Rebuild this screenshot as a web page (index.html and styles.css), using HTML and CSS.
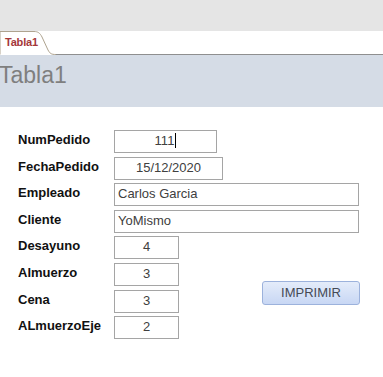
FILE: index.html
```html
<!DOCTYPE html>
<html lang="es">
<head>
    <meta charset="UTF-8">
    <meta name="viewport" content="width=device-width, initial-scale=1.0">
    <title>Tabla1</title>
    <link rel="stylesheet" href="styles.css">
</head>
<body>
    <div class="topbar"></div>

    <div class="tabstrip">
        <div class="tab">
            <svg class="tab-shape" width="56" height="24" viewBox="0 0 56 24">
                <path d="M0 23.5 V0.5 H34 C38 0.5 40 2 42 6 L48 19 C50 22.5 51 23.5 56 23.5" fill="#fff" stroke="#aea38f" stroke-width="1"/>
            </svg>
            <span class="tab-label">Tabla1</span>
        </div>
        <div class="tab-rest"></div>
    </div>

    <div class="header">
        <h1>Tabla1</h1>
    </div>

    <div class="form">
        <label class="lbl">NumPedido</label>
        <div class="box num center">111<span class="caret"></span></div>

        <label class="lbl">FechaPedido</label>
        <div class="box date center">15/12/2020</div>

        <label class="lbl">Empleado</label>
        <div class="box wide">Carlos Garcia</div>

        <label class="lbl">Cliente</label>
        <div class="box wide">YoMismo</div>

        <label class="lbl">Desayuno</label>
        <div class="box small center">4</div>

        <label class="lbl">Almuerzo</label>
        <div class="box small center">3</div>

        <label class="lbl">Cena</label>
        <div class="box small center">3</div>

        <label class="lbl">ALmuerzoEje</label>
        <div class="box small center">2</div>

        <button class="btn-print">IMPRIMIR</button>
    </div>
</body>
</html>
```

FILE: styles.css
```css
body {
    margin: 0;
    font-family: "Liberation Sans", Arial, sans-serif;
    background-color: #fff;
    width: 383px;
    height: 377px;
    overflow: hidden;
}
.topbar {
    height: 31px;
    background-color: #e5e5e5;
}
.tabstrip {
    display: flex;
    height: 24px;
    background-color: #fff;
}
.tab {
    position: relative;
    width: 56px;
    height: 24px;
    flex: none;
}
.tab-shape {
    display: block;
}
.tab-label {
    position: absolute;
    left: 5px;
    top: 5px;
    font-size: 11px;
    font-weight: bold;
    letter-spacing: -0.2px;
    color: #a4373a;
}
.tab-rest {
    flex: 1;
    border-bottom: 1px solid #8f8f8f;
    box-sizing: border-box;
}
.header {
    height: 52px;
    background-color: #d5dce6;
    padding-top: 7px;
    box-sizing: border-box;
}
.header h1 {
    margin: 0 0 0 -1px;
    font-size: 23px;
    font-weight: normal;
    color: #7f7f7f;
    line-height: normal;
}
.form {
    display: grid;
    grid-template-columns: 96px 148px 98px;
    grid-auto-rows: 23px;
    row-gap: 3.6px;
    padding: 23px 0 0 18px;
}
.lbl {
    grid-column: 1;
    display: flex;
    align-items: center;
    padding-bottom: 4px;
    font-size: 13px;
    font-weight: bold;
    color: #111;
}
.box {
    grid-column: 2;
    box-sizing: border-box;
    height: 23px;
    border: 1px solid #a5a5a5;
    padding: 0 3px;
    font-size: 13px;
    line-height: 20px;
    color: #404040;
    white-space: nowrap;
}
.center {
    text-align: center;
}
.num {
    width: 103px;
}
.date {
    width: 109px;
}
.wide {
    grid-column: 2 / 4;
    width: 245px;
}
.small {
    width: 65px;
}
.caret {
    display: inline-block;
    width: 1px;
    height: 15px;
    margin-left: 1px;
    background-color: #000;
    vertical-align: -3px;
}
.btn-print {
    grid-column: 3;
    grid-row: 6 / 8;
    align-self: start;
    margin-top: 18px;
    width: 98px;
    height: 24px;
    border: 1px solid #9cb2dc;
    border-radius: 3px;
    background: linear-gradient(#e4ecfa, #c8d7f4);
    font-family: "Liberation Sans", Arial, sans-serif;
    font-size: 13px;
    color: #454a55;
    padding: 0;
}
```
